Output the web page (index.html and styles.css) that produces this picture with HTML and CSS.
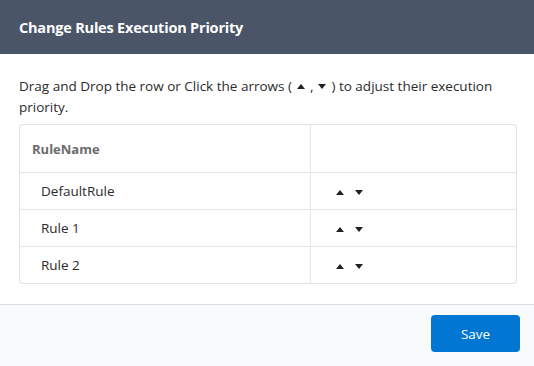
FILE: index.html
```
<!DOCTYPE html>
<html lang="en">
<head>
  <meta charset="UTF-8" />
  <title>Change Rules Execution Priority</title>
  <link rel="stylesheet" href="styles.css">
</head>
<body>
  <div class="modal">
    <header class="modal-header">
      <h2>Change Rules Execution Priority</h2>
    </header>

    <div class="modal-body">
      <p class="hint"><span>Drag and Drop the row or Click the arrows (</span><svg class="arrow in-text" width="8" height="5" viewBox="0 0 8 5"><polygon points="4,0 8,5 0,5"/></svg><span>,</span><svg class="arrow in-text" width="8" height="5" viewBox="0 0 8 5"><polygon points="0,0 8,0 4,5"/></svg><span>) to adjust their execution</span> <span>priority.</span></p>

      <div class="table-wrap">
        <table class="rules">
          <colgroup>
            <col class="name-col">
            <col>
          </colgroup>
          <thead>
            <tr><th class="name-head">RuleName</th><th></th></tr>
          </thead>
          <tbody>
            <tr>
              <td class="name">DefaultRule</td>
              <td class="moves">
                <svg class="arrow" width="8" height="5" viewBox="0 0 8 5"><polygon points="4,0 8,5 0,5"/></svg>
                <svg class="arrow" width="8" height="5" viewBox="0 0 8 5"><polygon points="0,0 8,0 4,5"/></svg>
              </td>
            </tr>
            <tr>
              <td class="name">Rule 1</td>
              <td class="moves">
                <svg class="arrow" width="8" height="5" viewBox="0 0 8 5"><polygon points="4,0 8,5 0,5"/></svg>
                <svg class="arrow" width="8" height="5" viewBox="0 0 8 5"><polygon points="0,0 8,0 4,5"/></svg>
              </td>
            </tr>
            <tr>
              <td class="name">Rule 2</td>
              <td class="moves">
                <svg class="arrow" width="8" height="5" viewBox="0 0 8 5"><polygon points="4,0 8,5 0,5"/></svg>
                <svg class="arrow" width="8" height="5" viewBox="0 0 8 5"><polygon points="0,0 8,0 4,5"/></svg>
              </td>
            </tr>
          </tbody>
        </table>
      </div>
    </div>

    <footer class="modal-footer">
      <button type="button" class="save">Save</button>
    </footer>
  </div>
</body>
</html>
```

FILE: styles.css
```
body {
  margin: 0;
  padding: 0;
  font-family: 'Open Sans', 'Noto Sans', sans-serif;
  color: #2b2b2b;
  background: #fff;
}

.modal {
  width: 534px;
  height: 366px;
  display: flex;
  flex-direction: column;
}

.modal-header {
  background-color: #4a5568;
  height: 54px;
  display: flex;
  align-items: center;
  padding: 0 19px;
  box-sizing: border-box;
}

.modal-header h2 {
  margin: 0;
  color: #fff;
  font-size: 14.5px;
  font-weight: 700;
  letter-spacing: -0.2px;
}

.modal-body {
  padding: 22px 17px 18px 19px;
  flex: 1;
}

.hint {
  margin: 0 0 6px;
  font-size: 13.5px;
  line-height: 21px;
  letter-spacing: 0;
}

.arrow {
  fill: #222;
  vertical-align: 2px;
}

.arrow.in-text {
  margin: 0 5px 0 5px;
}

.table-wrap {
  border: 1px solid #dfe1e4;
  border-radius: 4px;
  overflow: hidden;
}

.rules {
  width: 100%;
  table-layout: fixed;
  border-collapse: collapse;
  font-size: 13.5px;
}

.rules col.name-col {
  width: 290px;
}

.rules th {
  text-align: left;
  height: 47px;
  padding: 0 12px;
  color: #6b6b6b;
  font-weight: 700;
  font-size: 13px;
  border-bottom: 1px solid #e3e5e8;
}

.rules th.name-head,
.rules td.name {
  border-right: 1px solid #e3e5e8;
}

.rules td {
  height: 36px;
  padding: 0;
  border-bottom: 1px solid #e3e5e8;
}

.rules tbody tr:last-child td {
  border-bottom: none;
}

.rules td.name {
  padding-left: 21px;
}

.rules td.moves {
  padding-left: 25px;
}

.rules td.moves .arrow {
  margin-right: 8px;
  vertical-align: 1px;
}

.modal-footer {
  height: 62px;
  box-sizing: border-box;
  border-top: 1px solid #dcdfe3;
  background: #f8fafc;
  display: flex;
  justify-content: flex-end;
  align-items: center;
  padding: 0 14px 4px 0;
}

.save {
  background-color: #0176d3;
  color: #fff;
  border: none;
  border-radius: 4px;
  width: 89px;
  height: 37px;
  font-family: 'Open Sans', 'Noto Sans', sans-serif;
  font-size: 13.5px;
  cursor: pointer;
}
```
